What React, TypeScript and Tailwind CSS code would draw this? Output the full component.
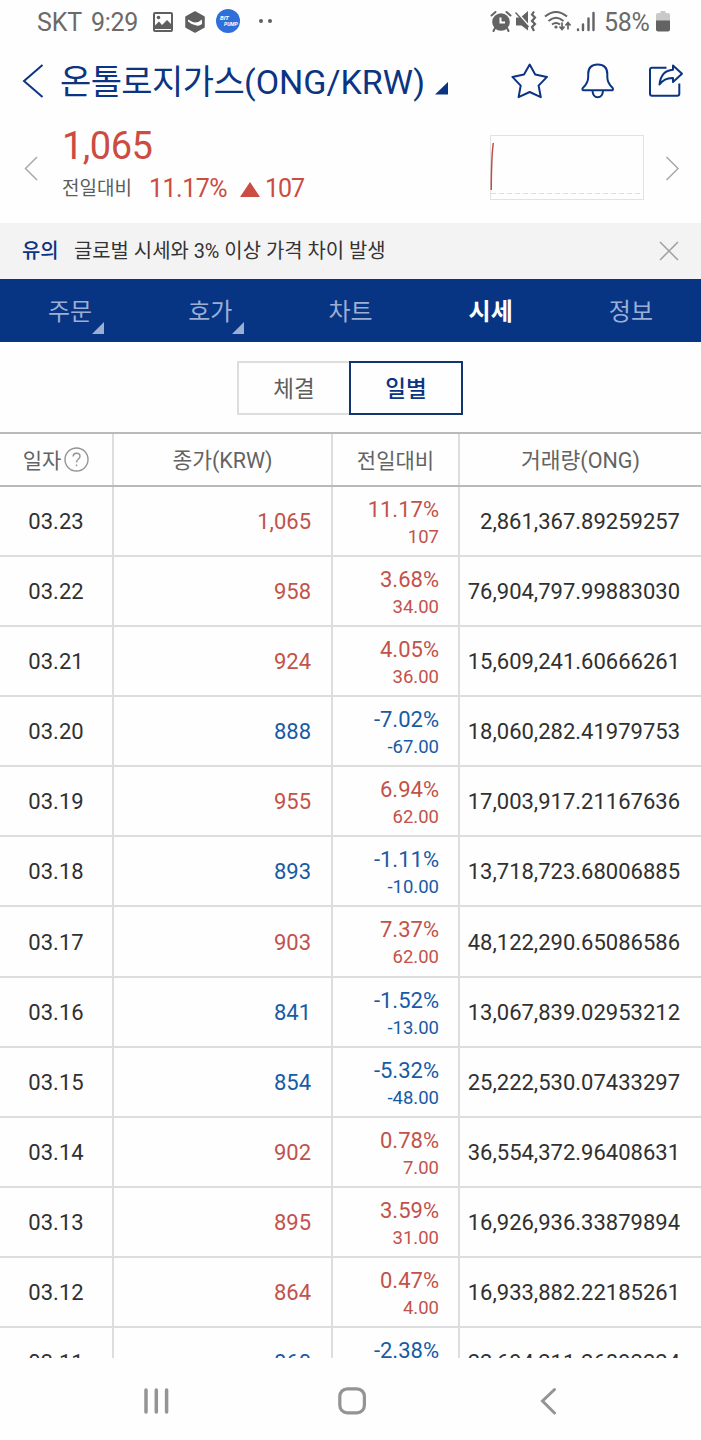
import React from "react";

type Row = { date: string; close: string; pct: string; diff: string; vol: string };

const rows: Row[] = [
  { date: "03.23", close: "1,065", pct: "11.17%", diff: "107", vol: "2,861,367.89259257" },
  { date: "03.22", close: "958", pct: "3.68%", diff: "34.00", vol: "76,904,797.99883030" },
  { date: "03.21", close: "924", pct: "4.05%", diff: "36.00", vol: "15,609,241.60666261" },
  { date: "03.20", close: "888", pct: "-7.02%", diff: "-67.00", vol: "18,060,282.41979753" },
  { date: "03.19", close: "955", pct: "6.94%", diff: "62.00", vol: "17,003,917.21167636" },
  { date: "03.18", close: "893", pct: "-1.11%", diff: "-10.00", vol: "13,718,723.68006885" },
  { date: "03.17", close: "903", pct: "7.37%", diff: "62.00", vol: "48,122,290.65086586" },
  { date: "03.16", close: "841", pct: "-1.52%", diff: "-13.00", vol: "13,067,839.02953212" },
  { date: "03.15", close: "854", pct: "-5.32%", diff: "-48.00", vol: "25,222,530.07433297" },
  { date: "03.14", close: "902", pct: "0.78%", diff: "7.00", vol: "36,554,372.96408631" },
  { date: "03.13", close: "895", pct: "3.59%", diff: "31.00", vol: "16,926,936.33879894" },
  { date: "03.12", close: "864", pct: "0.47%", diff: "4.00", vol: "16,933,882.22185261" },
  { date: "03.11", close: "860", pct: "-2.38%", diff: "-21.00", vol: "22,694,211.26892224" },
];

const tabs = [
  { label: "주문", more: true },
  { label: "호가", more: true },
  { label: "차트" },
  { label: "시세", active: true },
  { label: "정보" },
];

function StatusBar() {
  return (
    <div className="flex h-11 items-center text-[25px] leading-[42px] text-[#6a6a6a]">
      <span className="ml-[37px] w-[46px] pt-px tracking-[-0.2px]">SKT</span>
      <span className="ml-[8px] w-[48px] pt-px tracking-[-0.3px]">9:29</span>
      <svg className="-mt-px ml-[13px] shrink-0" width="22" height="22" viewBox="0 0 22 22">
        <rect x="2" y="2" width="18" height="18" rx="1" fill="none" stroke="#5f5f5f" strokeWidth="2" />
        <path d="M3 18V14.500L7 10.500L10 14L15 9L19 13V18Z" fill="#5f5f5f" />
        <circle cx="6.500" cy="6.500" r="1.800" fill="#5f5f5f" />
      </svg>
      <svg className="-mt-px ml-[10px] shrink-0" width="22" height="24" viewBox="0 0 22 24">
        <path d="M11 2L20 6.800V17.200L11 22L2 17.200V6.800Z" fill="#5f5f5f" stroke="#5f5f5f" strokeWidth="1.500" strokeLinejoin="round" />
        <path d="M4 9.500Q8 12 11 12.500Q15 12.500 18 9.500V14Q15 16.500 12.500 15.500Q7 14.500 4 11.500Z" fill="#fff" />
      </svg>
      <div className="-mt-[2px] ml-[10px] flex h-[24px] w-[24px] shrink-0 flex-col justify-center rounded-full bg-[#2f6fdb] text-[6px] leading-[6px] font-bold text-white italic">
        <span className="pl-[4px]">BIT</span>
        <span className="pl-[8px] text-[5px]">PUMP</span>
      </div>
      <span className="-mt-[3px] ml-[19px] h-[4px] w-[4px] rounded-full bg-[#5f5f5f]" />
      <span className="-mt-[3px] ml-[5px] h-[4px] w-[4px] rounded-full bg-[#5f5f5f]" />
      <div className="mr-[30px] ml-auto flex items-center">
        <svg className="-mt-[2px]" width="24" height="24" viewBox="0 0 24 24" fill="none" stroke="#636363">
          <circle cx="12" cy="13" r="8.800" fill="#636363" stroke="none" />
          <path d="M2.500 6.500L6.500 3M21.500 6.500L17.500 3M6 19L4.500 22M18 19L19.500 22" strokeWidth="2" strokeLinecap="round" />
          <path d="M11.500 8.500V13.500H16" stroke="#fff" strokeWidth="2" />
        </svg>
        <svg className="-mt-[2px] ml-[2px]" width="23" height="24" viewBox="0 0 23 24">
          <path d="M1 8.500H5.500L13 2V21.500L6.500 16.500H1Z" fill="#636363" />
          <path d="M0 1.500L14 17" stroke="#fff" strokeWidth="2" />
          <path d="M0.500 3.500L13.500 18" stroke="#636363" strokeWidth="1.500" />
          <path d="M19 2.500l-2 3 3 3-3 3.500 3 3-3 3 2 4" fill="none" stroke="#636363" strokeWidth="2.200" />
        </svg>
        <svg className="-mt-[2px] ml-[5px]" width="30" height="24" viewBox="0 0 30 24" fill="none" stroke="#636363" strokeWidth="2">
          <path d="M2 7.500Q13 -1.500 24 7.500M5.500 12Q13 5.500 20.500 12M9 15.500Q13 12.500 17 15.500" />
          <circle cx="13" cy="18" r="1.600" fill="#636363" stroke="none" />
          <path d="M19 13.500V20M16.500 17.500L19 20.500L21.500 17.500M25 20.500V14.500M22.500 16.500L25 13.500L27.500 16.500" strokeWidth="1.700" />
        </svg>
        <svg className="-mt-[2px] ml-[3px]" width="20" height="24" viewBox="0 0 20 24" stroke="#636363" strokeWidth="2.400" strokeLinecap="round">
          <path d="M2 20.500V21M7 15.500V21M12.500 9.500V21M17.500 4V21" />
        </svg>
        <span className="ml-[8px] w-[46px] pt-px tracking-[-0.3px]">58%</span>
        <svg className="-mt-[3px] ml-[5px]" width="16" height="24" viewBox="0 0 16 24">
          <path d="M5.500 2H10.500V4H13Q15 4 15 6V12H1V6Q1 4 3 4H5.500Z" fill="#c9c9c9" />
          <path d="M1 11.500H15V20.500Q15 22.500 13 22.500H3Q1 22.500 1 20.500Z" fill="#636363" />
        </svg>
      </div>
    </div>
  );
}

function TitleBar() {
  return (
    <header className="flex h-[74px] items-center text-[#0b3482]">
      <svg className="ml-[20px] shrink-0" width="26" height="38" viewBox="0 0 26 38" fill="none" stroke="currentColor" strokeWidth="2">
        <path d="M22.500 3L4 19L22.500 35" />
      </svg>
      <h1 className="ml-[14px] flex pt-[2px] text-[34px] leading-[48px] whitespace-nowrap">
        <span className="w-[184px] tracking-[-0.600px]">온톨로지가스</span>
        <span className="w-[184px]">(ONG/KRW)</span>
      </h1>
      <svg className="mt-[14px] ml-[7px] shrink-0" width="14" height="13" viewBox="0 0 14 13">
        <path d="M13 0V12.500H0Z" fill="currentColor" />
      </svg>
      <div className="mr-[17px] ml-auto flex gap-[32px]">
        <svg width="38" height="38" viewBox="511 62 38 38" fill="none" stroke="currentColor" strokeWidth="2" strokeLinejoin="round">
          <path d="M529.700 64.500L535.200 74.400L547 76.900L538.600 85.600L540.800 97.200L529.700 92L518.600 97.200L520.700 85.600L512.400 76.900L524 74.400Z" />
        </svg>
        <svg className="-ml-[2px]" width="38" height="38" viewBox="579 62 38 38" fill="none" stroke="currentColor" strokeWidth="2" strokeLinejoin="round">
          <path d="M583 90.200Q581.800 89.500 583 87.700Q588.200 83 588.200 77V74Q588.200 64.500 597.700 64.500Q607.300 64.500 607.300 74V77Q607.300 83 612.500 87.700Q613.500 89.500 612.500 90.200ZM592.500 91Q593 97.200 597.700 97.200Q602.500 97.200 603 91" />
        </svg>
        <svg className="-ml-[3px]" width="38" height="38" viewBox="646 62 38 38" fill="none" stroke="currentColor" strokeWidth="2" strokeLinejoin="round">
          <path d="M666.500 67.700H652Q650 67.700 650 69.700V93.500Q650 95.700 652 95.700H677.300Q679.300 95.700 679.300 93.500V83.500" />
          <path d="M673 65.500L682 73.700L673 82V77.900Q664.500 77.500 659.500 84.500Q661 70.500 673 69.700Z" />
        </svg>
      </div>
    </header>
  );
}

function PriceSummary() {
  return (
    <section className="flex h-[105px] items-start">
      <svg className="mt-[36px] ml-[23px] shrink-0" width="16" height="28" viewBox="0 0 16 28" fill="none" stroke="#a9a9a9" strokeWidth="1.500">
        <path d="M14 3L2.500 14.500L14 26" />
      </svg>
      <div className="ml-[23px] text-[#cb4c42]">
        <div className="mt-[5px] h-[46px] text-[38px] leading-[46px] tracking-[-0.500px]">1,065</div>
        <div className="mt-[4px] flex h-8 items-center text-[25px] leading-8">
          <span className="w-[87px] text-[19px] text-[#5c5c5c]">전일대비</span>
          <span className="w-[91px] tracking-[-0.500px]">11.17%</span>
          <svg width="20" height="15" viewBox="0 0 20 15">
            <path d="M10 0L20 15H0Z" fill="#cb4c42" />
          </svg>
          <span className="ml-[5px] tracking-[-1px]">107</span>
        </div>
      </div>
      <svg className="mt-[17px] mr-[20px] ml-auto" width="154" height="65" viewBox="0 0 154 65" fill="none">
        <rect x="0.500" y="0.500" width="153" height="64" stroke="#e2e2e2" />
        <path d="M1 58.500H153" stroke="#dedede" strokeDasharray="5 3" />
        <path d="M1.200 55Q1.500 20 3.300 8" stroke="#bd5148" strokeWidth="1.500" />
      </svg>
      <svg className="mt-[36px] mr-[21px] shrink-0" width="16" height="28" viewBox="0 0 16 28" fill="none" stroke="#a9a9a9" strokeWidth="1.500">
        <path d="M2.500 3L14 14.500L2.500 26" />
      </svg>
    </section>
  );
}

function DailyRow({ row }: { row: Row }) {
  const tone = row.pct.startsWith("-") ? "text-[#175aa6]" : "text-[#c2524a]";
  return (
    <div className="grid h-[70.080px] shrink-0 grid-cols-[114px_219px_127px_1fr] border-b-2 border-[#dddddd] text-[22px] leading-[28px] text-[#303030]">
      <div className="flex items-center justify-center border-r-2 border-[#dddddd] pt-[2px]">{row.date}</div>
      <div className={"flex items-center justify-end border-r-2 border-[#dddddd] pt-[2px] pr-[20px] " + tone}>{row.close}</div>
      <div className={"flex flex-col items-end border-r-2 border-[#dddddd] pt-[9px] pr-[19px] " + tone}>
        <span>{row.pct}</span>
        <span className="text-[18.500px] leading-[27px]">{row.diff}</span>
      </div>
      <div className="flex items-center justify-end pt-[2px] pr-[21px]">{row.vol}</div>
    </div>
  );
}

export default function App() {
  return (
    <div className="flex h-[1440px] w-[701px] flex-col overflow-hidden bg-[#fefefe] font-[Roboto,'Noto_Sans_CJK_KR',sans-serif]">
      <StatusBar />
      <TitleBar />
      <PriceSummary />
      <div className="flex h-[56px] shrink-0 items-center bg-[#f3f3f3] pr-[22px] pl-[22px] text-[19.900px] leading-[30px] text-[#333333]">
        <span className="w-[52px] pt-px font-medium text-[#0b3482]">유의</span>
        <span className="pt-px">글로벌 시세와 3% 이상 가격 차이 발생</span>
        <svg className="ml-auto" width="20" height="20" viewBox="0 0 20 20" stroke="#a0a0a0" strokeWidth="1.500">
          <path d="M1 1L19 19M19 1L1 19" />
        </svg>
      </div>
      <nav className="grid h-[63px] shrink-0 grid-cols-5 bg-[#083484]">
        {tabs.map((t) => (
          <div key={t.label} className="relative flex items-center justify-center pt-[2px] text-[24px] leading-[36px]">
            <span className={t.active ? "font-bold text-white" : "text-[#9baed4]"}>{t.label}</span>
            {t.more && (
              <svg className="absolute right-[36px] bottom-[8px]" width="12" height="12" viewBox="0 0 12 12">
                <path d="M12 0V12H0Z" fill="#9baed4" />
              </svg>
            )}
          </div>
        ))}
      </nav>
      <div className="flex h-[90px] shrink-0 pt-[19px] pl-[237px] text-[22.500px] leading-[32px]">
        <div className="flex h-[54px] w-[112px] items-center justify-center border-2 border-r-0 border-[#dddddd] pt-[2px] text-[#5e5e5e]">체결</div>
        <div className="flex h-[54px] w-[114px] items-center justify-center border-2 border-[#12346f] pt-[2px] font-medium text-[#0b3482]">일별</div>
      </div>
      <div className="grid h-[55px] shrink-0 grid-cols-[114px_219px_127px_1fr] border-y-2 border-[#b9b9b9] text-[21px] leading-[30px] text-[#636363]">
        <div className="flex items-center justify-center border-r-2 border-[#dddddd]">
          <span className="pt-[2px]">일자</span>
          <svg className="ml-[3px]" width="25" height="25" viewBox="0 0 25 25" fill="none" stroke="#949494" strokeWidth="1.400">
            <circle cx="12.500" cy="12.500" r="11.500" />
            <path d="M9 9.500Q9.300 6.300 12.500 6.300Q16 6.300 16 9.300Q16 11 14.200 12.300Q12.500 13.500 12.500 15.500M12.500 17.500V19.200" />
          </svg>
        </div>
        <div className="flex items-center justify-center border-r-2 border-[#dddddd] pt-[2px] text-[21.500px]">종가(KRW)</div>
        <div className="flex items-center justify-center border-r-2 border-[#dddddd] pt-[2px]">전일대비</div>
        <div className="flex items-center justify-center pt-[2px] text-[21.500px]">거래량(ONG)</div>
      </div>
      <main className="flex h-[871px] shrink-0 flex-col overflow-hidden">
        {rows.map((r) => (
          <DailyRow key={r.date} row={r} />
        ))}
      </main>
      <footer className="flex h-[82px] shrink-0 items-center pt-[3px] pl-[141px]">
        <svg width="30" height="30" viewBox="0 0 30 30" stroke="#949494" strokeWidth="3.500" strokeLinecap="round">
          <path d="M5 4V26M15.300 4V26M25.600 4V26" />
        </svg>
        <svg className="ml-[166px]" width="30" height="30" viewBox="0 0 30 30" fill="none" stroke="#949494" strokeWidth="3.200">
          <rect x="2.800" y="2.800" width="24.600" height="24" rx="7.500" />
        </svg>
        <svg className="ml-[166px]" width="30" height="30" viewBox="0 0 30 30" fill="none" stroke="#949494" strokeWidth="3" strokeLinecap="round">
          <path d="M21.500 3.500L9.500 15L21.500 27" />
        </svg>
      </footer>
    </div>
  );
}
